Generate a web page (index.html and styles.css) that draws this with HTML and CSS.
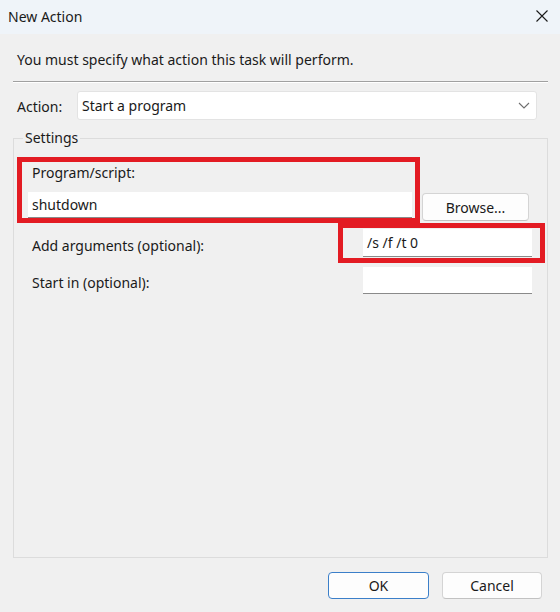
FILE: index.html
```html
<!DOCTYPE html>
<html lang="en">
<head>
    <meta charset="UTF-8">
    <meta name="viewport" content="width=device-width, initial-scale=1.0">
    <title>New Action</title>
    <link rel="stylesheet" href="styles.css">
</head>
<body>

<!-- Fenêtre de dialogue -->
<div class="dialog">

    <!-- Barre de titre -->
    <div class="titlebar">
        <span class="title">New Action</span>
        <svg class="close" width="12" height="12" viewBox="0 0 12 12">
            <path d="M0.5 0.5 L11.5 11.5 M11.5 0.5 L0.5 11.5" stroke="#1a1a1a" stroke-width="1.1" fill="none"/>
        </svg>
    </div>

    <div class="content">
        <p class="intro">You must specify what action this task will perform.</p>
        <div class="rule"></div>

        <!-- Choix de l'action -->
        <div class="action-row">
            <label class="action-label">Action:</label>
            <div class="combo">
                <span>Start a program</span>
                <svg width="12" height="7" viewBox="0 0 12 7">
                    <path d="M1 1 L6 6 L11 1" stroke="#6e6e6e" stroke-width="1.1" fill="none"/>
                </svg>
            </div>
        </div>

        <!-- Paramètres -->
        <fieldset class="settings">
            <legend>Settings</legend>
            <div class="field-label">Program/script:</div>
            <div class="program-row">
                <div class="textbox program">shutdown</div>
                <button class="btn browse">Browse...</button>
            </div>
            <div class="option-row">
                <label>Add arguments (optional):</label>
                <div class="textbox small">/s /f /t 0</div>
            </div>
            <div class="option-row start-row">
                <label>Start in (optional):</label>
                <div class="textbox small"></div>
            </div>
        </fieldset>

        <!-- Boutons -->
        <div class="buttons">
            <button class="btn ok">OK</button>
            <button class="btn cancel">Cancel</button>
        </div>
    </div>

    <!-- Cadres rouges d'annotation -->
    <div class="mark mark-program"></div>
    <div class="mark mark-args"></div>
</div>

</body>
</html>
```

FILE: styles.css
```css
/* Style général */
* {
    box-sizing: border-box;
}

body {
    margin: 0;
    font-family: 'Noto Sans', 'Open Sans', sans-serif;
    font-size: 14px;
    color: #1a1a1a;
    background-color: #f0f0f0;
}

.dialog {
    position: relative;
    width: 560px;
    height: 612px;
    background-color: #f0f0f0;
}

/* Barre de titre */
.titlebar {
    height: 34px;
    background-color: #eff4f9;
    display: flex;
    align-items: center;
    justify-content: space-between;
    padding: 0 12px 2px 8px;
}

.title {
    font-size: 14px;
}

/* Contenu */
.content {
    padding: 0 12px 0 13px;
}

.intro {
    margin: 16px 0 0 4px;
    line-height: 20px;
}

.rule {
    margin-top: 11px;
    height: 2px;
    border-top: 1px solid #a0a0a0;
    border-bottom: 1px solid #ffffff;
}

/* Ligne Action */
.action-row {
    display: flex;
    align-items: center;
    margin-top: 8px;
}

.action-label {
    width: 64px;
    padding-left: 4px;
    padding-top: 2px;
}

.combo {
    flex: 1;
    height: 29px;
    margin-right: 11px;
    background-color: #ffffff;
    border: 1px solid #e3e3e3;
    border-radius: 3px;
    display: flex;
    align-items: center;
    justify-content: space-between;
    padding: 0 6px 0 4px;
}

/* Groupe Settings */
.settings {
    margin: 8px 0 0 0;
    height: 430px;
    padding: 15px 14px 0 14px;
    border: 1px solid #dcdcdc;
    border-radius: 0;
}

.settings legend {
    margin-left: -5px;
    padding: 0 2px;
    line-height: 20px;
}

.field-label {
    line-height: 20px;
    padding-left: 4px;
}

.program-row {
    display: flex;
    align-items: flex-start;
    margin-top: 9px;
}

.textbox {
    height: 28px;
    background-color: #ffffff;
    border-bottom: 1px solid #8a8a8a;
    padding: 0 4px;
    display: flex;
    align-items: center;
}

.textbox.program {
    width: 384px;
    height: 26px;
}

.textbox.small {
    width: 169px;
}

.option-row {
    display: flex;
    align-items: center;
    justify-content: space-between;
    margin-top: 8px;
    padding-right: 1px;
}

.option-row label {
    padding-left: 4px;
    padding-top: 4px;
}

.start-row {
    margin-top: 10px;
}

.start-row .textbox {
    height: 27px;
}

/* Boutons */
.btn {
    font-family: inherit;
    font-size: 14px;
    color: #1a1a1a;
    background-color: #fdfdfd;
    border: 1px solid #d4d4d4;
    border-bottom-color: #c2c2c2;
    border-radius: 4px;
    height: 28px;
    padding: 0;
}

.browse {
    width: 107px;
    margin: 1px 0 0 10px;
}

.buttons {
    display: flex;
    justify-content: flex-end;
    gap: 13px;
    margin-top: 14px;
    padding-right: 6px;
}

.ok {
    width: 101px;
    height: 27px;
    border: 1px solid #3b7fc9;
}

.cancel {
    width: 100px;
    height: 27px;
}

/* Annotations rouges */
.mark {
    position: absolute;
    border: 5px solid #e31b23;
}

.mark-program {
    left: 17px;
    top: 157px;
    width: 403px;
    height: 66px;
}

.mark-args {
    left: 338px;
    top: 223px;
    width: 207px;
    height: 40px;
}
```
